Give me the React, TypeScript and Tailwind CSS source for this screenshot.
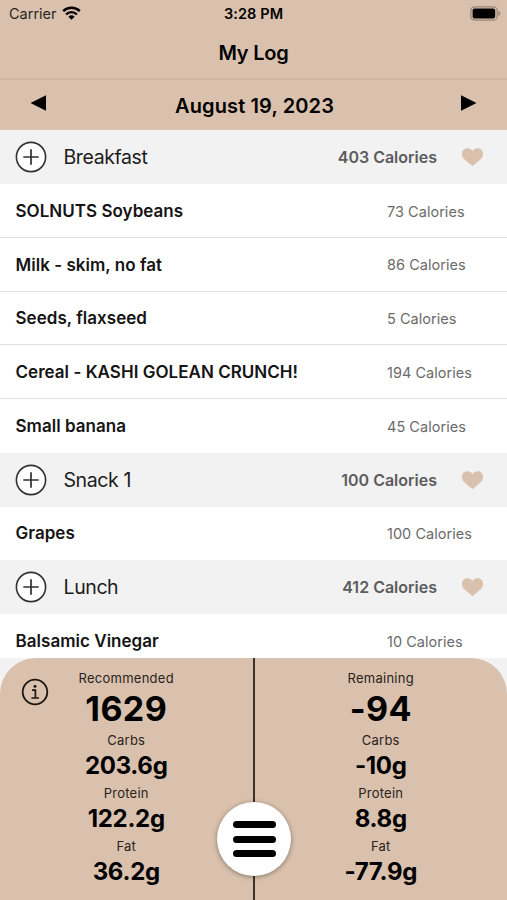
import React from "react";

interface Food {
  name: string;
  calories: number;
}

interface Meal {
  title: string;
  calories: number;
  foods: Food[];
}

interface Macro {
  label: string;
  value: string;
}

const meals: Meal[] = [
  {
    title: "Breakfast",
    calories: 403,
    foods: [
      { name: "SOLNUTS Soybeans", calories: 73 },
      { name: "Milk - skim, no fat", calories: 86 },
      { name: "Seeds, flaxseed", calories: 5 },
      { name: "Cereal - KASHI GOLEAN CRUNCH!", calories: 194 },
      { name: "Small banana", calories: 45 },
    ],
  },
  {
    title: "Snack 1",
    calories: 100,
    foods: [{ name: "Grapes", calories: 100 }],
  },
  {
    title: "Lunch",
    calories: 412,
    foods: [{ name: "Balsamic Vinegar", calories: 10 }],
  },
];

const recommended: Macro[] = [
  { label: "Carbs", value: "203.6g" },
  { label: "Protein", value: "122.2g" },
  { label: "Fat", value: "36.2g" },
];

const remaining: Macro[] = [
  { label: "Carbs", value: "-10g" },
  { label: "Protein", value: "8.8g" },
  { label: "Fat", value: "-77.9g" },
];

const StatusBar = () => (
  <div className="grid h-[27px] grid-cols-3 items-center pl-[9px] pr-[6px]">
    <div className="flex items-center gap-[5px] text-[14.5px] text-[#2b2622]">
      <span>Carrier</span>
      <svg className="-mt-0.5" width="19" height="14" viewBox="0 0 19 14" fill="none">
        <path d="M1.2 5.2a12 12 0 0 1 16.6 0" stroke="#000" strokeWidth="2.5" />
        <path d="M4.1 8.3a7.8 7.8 0 0 1 10.8 0" stroke="#000" strokeWidth="2.4" />
        <path d="M6.4 10.7a4.5 4.5 0 0 1 6.2 0L9.5 13.8z" fill="#000" />
      </svg>
    </div>
    <div className="-ml-[3px] text-center text-[14.5px] font-semibold tracking-[0.1px]">
      3:28 PM
    </div>
    <div className="flex justify-end">
      <svg width="31" height="15" viewBox="0 0 31 15" fill="none">
        <rect x="0.8" y="0.8" width="26.4" height="13.4" rx="4" stroke="#988779" strokeWidth="1.3" />
        <rect x="2.6" y="2.6" width="22.6" height="9.8" rx="2" fill="#000" />
        <path d="M28.4 5v5c1.3-.5 2-1.4 2-2.5s-.7-2-2-2.5z" fill="#988779" />
      </svg>
    </div>
  </div>
);

const MealHeader = ({ meal }: { meal: Meal }) => (
  <div className="flex h-[53.75px] items-center bg-[#f2f2f2] pl-[15px] pr-[23px]">
    <svg width="32" height="32" viewBox="0 0 32 32" fill="none" stroke="#2f3133">
      <circle cx="16" cy="16" r="14.6" fill="#fff" strokeWidth="1.6" />
      <path d="M16 8.3v15.4M8.3 16h15.4" strokeWidth="1.7" />
    </svg>
    <span className="ml-[16.5px] flex-1 pt-px text-[19.5px] tracking-[-0.4px] text-[#1c1c1c]">
      {meal.title}
    </span>
    <span className="text-[16px] font-semibold text-[#5c5c5c]">
      {meal.calories} Calories
    </span>
    <svg className="ml-[24px]" width="23" height="20" viewBox="0 0 23 20" fill="#d9c1ad">
      <path d="M11.5 19.3C9.8 17.7 6 15 3.6 12.6 1.8 10.8 1 9 1 6.7 1 3.6 3.3 1.3 6.3 1.3c2.1 0 4 1 5.2 2.7 1.2-1.7 3.1-2.7 5.2-2.7 3 0 5.3 2.3 5.3 5.4 0 2.3-.8 4.1-2.6 5.9-2.4 2.4-6.2 5.1-7.9 6.7z" />
    </svg>
  </div>
);

const FoodRow = ({ food }: { food: Food }) => (
  <div className="flex h-[53.75px] items-center border-b border-[#e0e0e0] bg-white pl-[15.5px] last:border-transparent">
    <span className="w-[371.5px] pt-0.5 text-[17px] font-semibold tracking-[0.03px] text-[#141414]">
      {food.name}
    </span>
    <span className="pt-0.5 text-[14.5px] tracking-[0.03px] text-[#6b6b6b]">
      {food.calories} Calories
    </span>
  </div>
);

const Totals = ({
  title,
  total,
  macros,
}: {
  title: string;
  total: string;
  macros: Macro[];
}) => (
  <div className="flex flex-1 flex-col items-center pt-[11px] text-black">
    <div className="h-[18px] text-[13px] leading-[18px] tracking-[0.25px] text-[#2a221b]">{title}</div>
    <div className="h-[43px] text-[34px] font-bold leading-[43px] tracking-[0.4px]">{total}</div>
    {macros.map((macro) => (
      <div key={macro.label} className="flex h-[53px] flex-col items-center">
        <div className="text-[13px] leading-[21px] tracking-[0.25px] text-[#2a221b]">{macro.label}</div>
        <div className="text-[24px] font-bold leading-[29px] tracking-[-0.3px]">{macro.value}</div>
      </div>
    ))}
  </div>
);

const App: React.FC = () => {
  return (
    <div className="flex h-[900px] w-[507px] flex-col overflow-hidden bg-[#f2f2f2] font-['Inter',sans-serif] text-black">
      <header className="h-[130.4px] shrink-0 bg-[#d9c1ad]">
        <StatusBar />
        <div className="flex h-[53px] items-center justify-center border-b-2 border-[#cfb5a2] text-[20px] font-semibold tracking-[-0.2px]">
          My Log
        </div>
        <div className="flex h-[50px] items-center justify-between px-[30px]">
          <svg className="-mt-1" width="17" height="16" viewBox="0 0 17 16">
            <path d="M0.5 8 16 .2v15.6z" />
          </svg>
          <span className="pl-0.5 pt-px text-[20px] font-semibold tracking-[0.12px]">
            August 19, 2023
          </span>
          <svg className="-mt-1" width="17" height="16" viewBox="0 0 17 16">
            <path d="M16.5 8 1 .2v15.6z" />
          </svg>
        </div>
      </header>

      <main className="min-h-0 flex-1 overflow-hidden">
        {meals.map((meal) => (
          <section key={meal.title}>
            <MealHeader meal={meal} />
            <div>
              {meal.foods.map((food) => (
                <FoodRow key={food.name} food={food} />
              ))}
            </div>
          </section>
        ))}
      </main>

      <footer className="relative flex h-[242px] shrink-0 rounded-t-[36px] bg-[#d9c1ad]">
        <svg
          className="absolute left-[21px] top-[20px]"
          width="28"
          height="28"
          viewBox="0 0 28 28"
          fill="none"
          stroke="#1d1712"
        >
          <circle cx="14" cy="14" r="12.3" strokeWidth="1.8" />
          <path d="M11 12.2h3.4v7.6M10.4 20h7.6" strokeWidth="1.7" />
          <circle cx="14" cy="8.3" r="1.5" fill="#1d1712" stroke="none" />
        </svg>
        <Totals title="Recommended" total="1629" macros={recommended} />
        <div className="w-[2px] bg-[#3b322b]" />
        <Totals title="Remaining" total="-94" macros={remaining} />

        {/* Menu button */}
        <button
          className="absolute left-[217px] top-[144px] flex h-[74px] w-[74px] flex-col items-center justify-center gap-[7.5px] rounded-full bg-white shadow-[0_1px_5px_rgba(0,0,0,0.4)]"
          aria-label="Menu"
        >
          <span className="h-[7px] w-[43px] rounded-full bg-black" />
          <span className="h-[7px] w-[43px] rounded-full bg-black" />
          <span className="h-[7px] w-[43px] rounded-full bg-black" />
        </button>
      </footer>
    </div>
  );
};

export default App;
